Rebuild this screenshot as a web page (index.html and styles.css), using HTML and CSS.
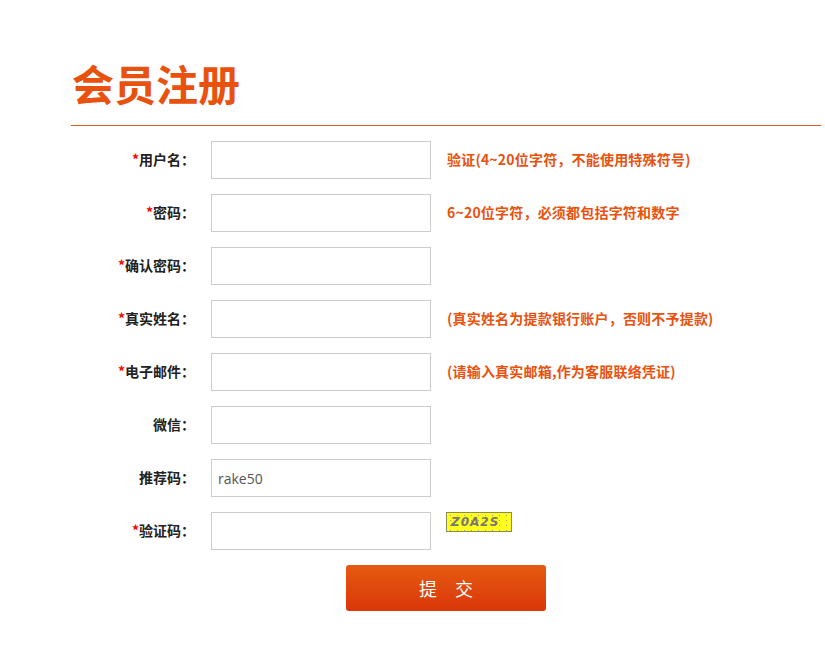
FILE: index.html
```html
<!DOCTYPE html>
<html lang="zh-CN">
<head>
    <meta charset="UTF-8">
    <meta name="viewport" content="width=device-width, initial-scale=1.0">
    <title>会员注册</title>
    <link rel="stylesheet" href="styles.css">
</head>
<body>

<div class="reg-box">
    <h1 class="reg-title">会员注册</h1>

    <form class="reg-form" onsubmit="return false;">
        <div class="row">
            <label class="label"><span class="req">*</span>用户名：</label>
            <input class="ipt" type="text">
            <span class="tip">验证(4~20位字符，不能使用特殊符号)</span>
        </div>
        <div class="row">
            <label class="label"><span class="req">*</span>密码：</label>
            <input class="ipt" type="password">
            <span class="tip">6~20位字符，必须都包括字符和数字</span>
        </div>
        <div class="row">
            <label class="label"><span class="req">*</span>确认密码：</label>
            <input class="ipt" type="password">
        </div>
        <div class="row">
            <label class="label"><span class="req">*</span>真实姓名：</label>
            <input class="ipt" type="text">
            <span class="tip">(真实姓名为提款银行账户，否则不予提款)</span>
        </div>
        <div class="row">
            <label class="label"><span class="req">*</span>电子邮件：</label>
            <input class="ipt" type="text">
            <span class="tip">(请输入真实邮箱,作为客服联络凭证)</span>
        </div>
        <div class="row">
            <label class="label">微信：</label>
            <input class="ipt" type="text">
        </div>
        <div class="row">
            <label class="label">推荐码：</label>
            <input class="ipt" type="text" value="rake50">
        </div>
        <div class="row">
            <label class="label"><span class="req">*</span>验证码：</label>
            <input class="ipt" type="text">
            <span class="captcha">Z0A2S</span>
        </div>
        <div class="btn-row">
            <button class="btn-submit" type="submit">提　交</button>
        </div>
    </form>
</div>

</body>
</html>
```

FILE: styles.css
```css
* { margin: 0; padding: 0; box-sizing: border-box; }
body { background: #fff; color: #333; font-family: "Noto Sans CJK SC", "Noto Sans", sans-serif; }
.reg-box { margin-left: 71px; width: 750px; padding-top: 53px; }
.reg-title { font-size: 42px; line-height: 60px; font-weight: bold; color: #e8520e; padding-left: 1px; padding-bottom: 12px; border-bottom: 1px solid #e05a22; }
.reg-form { padding-top: 15px; }
.row { display: flex; align-items: center; margin-bottom: 15px; }
.label { width: 124px; margin-right: 16px; padding-bottom: 3px; text-align: right; font-size: 14px; font-weight: bold; color: #222; line-height: 20px; }
.req { color: #f00; font-weight: bold; }
.ipt { width: 220px; height: 38px; border: 1px solid #ccc; padding: 0 6px; font-size: 14px; color: #555; font-family: "Open Sans", "Noto Sans CJK SC", sans-serif; outline: none; }
.tip { margin-left: 16px; padding-bottom: 3px; font-size: 14px; font-weight: bold; color: #e8520e; letter-spacing: 0.2px; }
.captcha { align-self: flex-start; margin-left: 15px; width: 66px; height: 20px; line-height: 18px; border: 1px solid #8c8c5a; background-color: #ffff1a; background-image: radial-gradient(circle, #999 0.6px, transparent 1px); background-size: 7px 5px; color: #777; font-family: "DejaVu Sans", sans-serif; font-size: 12px; font-style: italic; font-weight: bold; letter-spacing: 1px; padding-left: 4px; }
.btn-row { padding-left: 275px; }
.btn-submit { width: 200px; height: 46px; border: none; border-radius: 3px; background: linear-gradient(#e55b10, #db360a); color: #fff; font-size: 18px; font-family: "Noto Sans CJK SC", sans-serif; cursor: pointer; }
```
